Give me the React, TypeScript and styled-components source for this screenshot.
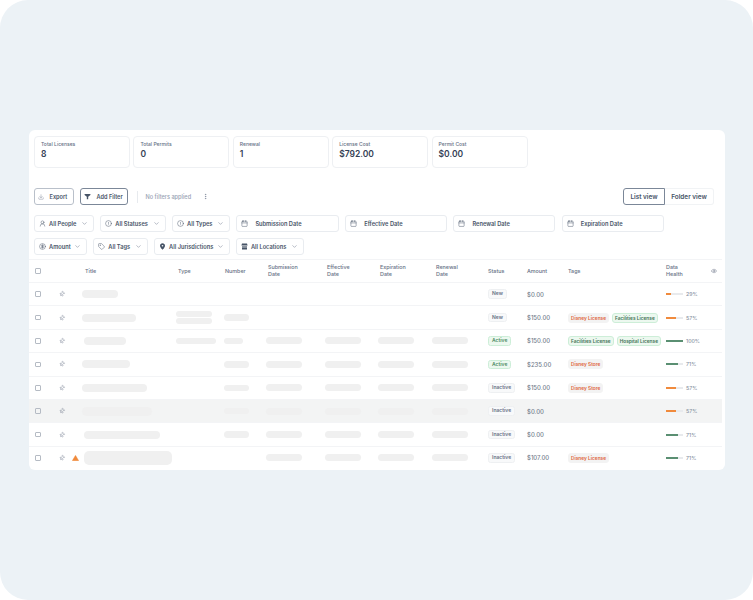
import { FC, ReactNode } from 'react';
import styled, { createGlobalStyle } from 'styled-components';
import {
  Calendar,
  ChevronDown,
  CircleAlert,
  CircleDollarSign,
  Download,
  Eye,
  EllipsisVertical,
  Pin,
  Tag,
  UserRound,
} from 'lucide-react';

const GlobalStyle = createGlobalStyle`
  html, body {
    margin: 0;
    padding: 0;
    background: #fff;
  }
  * {
    box-sizing: border-box;
  }
`;

const Page = styled.div`
  width: 753px;
  height: 600px;
  padding: 130px 28px 130px 29px;
  background: #ecf2f6;
  border-radius: 28px;
  font-family: Inter, 'Liberation Sans', sans-serif;
  color: #475467;
  overflow: hidden;
`;

const Card = styled.div`
  height: 340px;
  background: #fff;
  border-radius: 6px;
  padding-top: 6px;
`;

const Stats = styled.div`
  display: flex;
  gap: 3.4px;
  padding-left: 5px;
`;

const Stat = styled.div`
  width: 96px;
  height: 32px;
  padding: 4px 6px;
  border: 1px solid #eef0f3;
  border-radius: 4px;
`;

const StatLabel = styled.div`
  font-size: 5px;
  line-height: 6px;
  font-weight: 500;
  color: #667085;
`;

const StatValue = styled.div`
  margin-top: 1.5px;
  font-size: 8.5px;
  line-height: 10px;
  font-weight: 600;
  color: #344054;
`;

const Toolbar = styled.div`
  display: flex;
  align-items: center;
  height: 17px;
  margin-top: 20px;
  padding: 0 11px 0 5px;
`;

const ToolButton = styled.div<{ $w: number; $dark?: boolean }>`
  display: flex;
  align-items: center;
  gap: 5.5px;
  width: ${(p) => p.$w}px;
  height: 17px;
  margin-right: 6.5px;
  padding-left: 3px;
  border: 1px solid ${(p) => (p.$dark ? '#7b8798' : '#b9c0ca')};
  border-radius: 3px;
  font-size: 5.6px;
  font-weight: 600;
  white-space: nowrap;
  color: #475467;
`;

const Divider = styled.div`
  width: 1px;
  height: 12px;
  margin: 0 8px 0 2px;
  background: #e7eaee;
`;

const NoFilters = styled.span`
  width: 56px;
  font-size: 5.6px;
  font-weight: 500;
  color: #98a2b3;
`;

const ViewSwitch = styled.div`
  display: flex;
  margin-left: auto;
`;

const ViewTab = styled.div<{ $active?: boolean }>`
  display: flex;
  align-items: center;
  justify-content: center;
  width: ${(p) => (p.$active ? 42 : 49)}px;
  height: 17px;
  border: 1px solid ${(p) => (p.$active ? '#7b8798' : '#f1f3f5')};
  border-left: ${(p) => (p.$active ? '1px solid #7b8798' : 'none')};
  border-radius: ${(p) => (p.$active ? '3px 0 0 3px' : '0 3px 3px 0')};
  font-size: 6.4px;
  font-weight: 600;
  color: #475467;
`;

const FilterRow = styled.div`
  display: flex;
  gap: 6.3px;
  height: 17px;
  margin-top: 6px;
  padding-left: 5px;
  &:first-of-type {
    margin-top: 10px;
  }
`;

const FilterBox = styled.div<{ $w: number }>`
  display: flex;
  align-items: center;
  flex: none;
  width: ${(p) => p.$w}px;
  height: 17px;
  padding: 0 5px 0 4px;
  border: 1px solid #e9ecf0;
  border-radius: 3px;
  font-size: 5.7px;
  font-weight: 600;
  white-space: nowrap;
  color: #475467;
  svg {
    flex: none;
  }
`;

const FilterText = styled.span<{ $date?: boolean }>`
  margin-left: ${(p) => (p.$date ? 7 : 3)}px;
  flex: 1;
`;

const Table = styled.div`
  width: 693px;
  margin-top: 4px;
`;

const Row = styled.div<{ $head?: boolean; $hl?: boolean }>`
  display: grid;
  grid-template-columns: 26px 13px 14px 94px 48px 42px 59px 53px 54px 56px 39px 41px 98px 45px 11px;
  align-items: center;
  height: ${(p) => (p.$head ? 23 : 23.4)}px;
  border-top: 1px solid #f3f4f6;
  background: ${(p) => (p.$hl ? '#f3f4f4' : 'transparent')};
`;

const HeadCell = styled.div<{ $pad?: number }>`
  padding-left: ${(p) => p.$pad ?? 0}px;
  font-size: 5.4px;
  line-height: 7px;
  font-weight: 500;
  color: #667085;
`;

const CheckCell = styled.div`
  display: flex;
  padding-left: 6px;
`;

const Check = styled.div`
  width: 5.5px;
  height: 5.5px;
  border: 1px solid #b5bbc4;
  border-radius: 1px;
`;

const IconCell = styled.div`
  display: flex;
  align-items: center;
  justify-content: center;
  color: #667085;
`;

const EyeCell = styled.div`
  display: flex;
  color: #667085;
`;

const Skeleton = styled.div<{ $w: number; $h?: number; $ml?: number }>`
  width: ${(p) => p.$w}px;
  height: ${(p) => p.$h ?? 7}px;
  margin-left: ${(p) => p.$ml ?? 0}px;
  background: #f0f0f0;
  border-radius: 5px;
`;

const SkeletonStack = styled.div`
  display: flex;
  flex-direction: column;
  gap: 1.5px;
`;

const StatusCell = styled.div`
  display: flex;
  align-items: center;
`;

const Status = styled.span<{ $active?: boolean }>`
  padding: 0 3px;
  height: 9.5px;
  line-height: 7.5px;
  font-size: 5px;
  font-weight: 600;
  background: ${(p) => (p.$active ? '#ecf8ef' : '#f8f9fa')};
  border: 1px solid ${(p) => (p.$active ? '#cdeed8' : '#eef0f2')};
  border-radius: 2.5px;
  color: ${(p) => (p.$active ? '#4c8a64' : '#667085')};
`;

const Amount = styled.div`
  font-size: 6px;
  font-weight: 500;
  color: #737d8c;
`;

const Tags = styled.div`
  display: flex;
  gap: 3px;
  white-space: nowrap;
`;

const TagPill = styled.span<{ $green?: boolean }>`
  padding: 0 2px;
  height: 10px;
  line-height: 8.6px;
  font-size: 4.8px;
  font-weight: 600;
  background: ${(p) => (p.$green ? '#ecf8ef' : '#f3f3f3')};
  border: 0.7px solid ${(p) => (p.$green ? '#cdeed8' : '#f3f3f3')};
  border-radius: 3px;
  color: ${(p) => (p.$green ? '#3f7256' : '#e0653c')};
`;

const Health = styled.div`
  display: flex;
  align-items: center;
  gap: 3px;
`;

const Track = styled.div`
  width: 17px;
  height: 2px;
  background: #e8eaed;
`;

const Fill = styled.div<{ $color: string }>`
  height: 100%;
  background: ${(p) => p.$color};
`;

const Pct = styled.span`
  font-size: 5.2px;
  font-weight: 500;
  color: #8a94a3;
`;

const Warning: FC = () => (
  <svg width="7" height="6" viewBox="0 0 8 7">
    <path d="M4 .4 7.8 6.6H.2z" fill="#f08a3c" stroke="#f08a3c" strokeWidth=".4" strokeLinejoin="round" />
  </svg>
);

const FilterFunnel: FC = () => (
  <svg width="7" height="7" viewBox="0 0 7 7">
    <path d="M.6 1h5.8v1L4.2 3.8V6.2H2.8V3.8L.6 2z" fill="#475467" />
  </svg>
);

const MapMarker: FC = () => (
  <svg width="7" height="7" viewBox="0 0 7 7">
    <path d="M3.5.3C2 .3 1 1.4 1 2.7c0 1.7 2.5 4 2.5 4S6 4.4 6 2.7C6 1.4 5 .3 3.5.3z" fill="#475467" />
    <circle cx="3.5" cy="2.7" r=".8" fill="#fff" />
  </svg>
);

const StoreFilled: FC = () => (
  <svg width="7" height="7" viewBox="0 0 7 7">
    <path d="M1 .6h5l.6 2H.4zM1 3.2h5v3.2H1z" fill="#475467" />
    <path d="M1 4.2h5" stroke="#fff" strokeWidth=".5" />
  </svg>
);

const stats = [
  ['Total Licenses', '8'],
  ['Total Permits', '0'],
  ['Renewal', '1'],
  ['License Cost', '$792.00'],
  ['Permit Cost', '$0.00'],
];

const small = { size: 7, strokeWidth: 1.6 };
const chevron = <ChevronDown size={7} strokeWidth={1.6} color="#667085" />;

const filtersTop: { w: number; icon: ReactNode; label: string; date?: boolean }[] = [
  { w: 60, icon: <UserRound {...small} />, label: 'All People' },
  { w: 65.5, icon: <CircleAlert {...small} />, label: 'All Statuses' },
  { w: 58, icon: <CircleAlert {...small} />, label: 'All Types' },
  { w: 102.5, icon: <Calendar {...small} />, label: 'Submission Date', date: true },
  { w: 102, icon: <Calendar {...small} />, label: 'Effective Date', date: true },
  { w: 102, icon: <Calendar {...small} />, label: 'Renewal Date', date: true },
  { w: 102, icon: <Calendar {...small} />, label: 'Expiration Date', date: true },
];

const filtersBottom: { w: number; icon: ReactNode; label: string }[] = [
  { w: 53, icon: <CircleDollarSign {...small} />, label: 'Amount' },
  { w: 54.5, icon: <Tag {...small} />, label: 'All Tags' },
  { w: 75.5, icon: <MapMarker />, label: 'All Jurisdictions' },
  { w: 68, icon: <StoreFilled />, label: 'All Locations' },
];

type TagData = { label: string; green?: boolean };

type RowData = {
  title: number;
  titleMl?: number;
  titleH?: number;
  warn?: boolean;
  type?: number[];
  number?: number;
  dates?: boolean;
  status: string;
  amount: string;
  tags?: TagData[];
  health: number;
  hl?: boolean;
};

const disneyLicense = { label: 'Disney License' };
const disneyStore = { label: 'Disney Store' };

const rows: RowData[] = [
  { title: 36, status: 'New', amount: '$0.00', health: 29 },
  {
    title: 54,
    type: [36, 36],
    number: 25,
    status: 'New',
    amount: '$150.00',
    tags: [disneyLicense, { label: 'Facilities License', green: true }],
    health: 57,
  },
  {
    title: 42,
    titleMl: 2,
    type: [40],
    number: 19,
    dates: true,
    status: 'Active',
    amount: '$150.00',
    tags: [
      { label: 'Facilities License', green: true },
      { label: 'Hospital License', green: true },
    ],
    health: 100,
  },
  { title: 48, number: 25, dates: true, status: 'Active', amount: '$235.00', tags: [disneyStore], health: 71 },
  { title: 65, number: 25, dates: true, status: 'Inactive', amount: '$150.00', tags: [disneyStore], health: 57 },
  { title: 70, titleH: 9, number: 25, dates: true, status: 'Inactive', amount: '$0.00', health: 57, hl: true },
  { title: 76, titleMl: 2, number: 25, dates: true, status: 'Inactive', amount: '$0.00', health: 71 },
  {
    title: 88,
    titleMl: 2,
    titleH: 14,
    warn: true,
    dates: true,
    status: 'Inactive',
    amount: '$107.00',
    tags: [disneyLicense],
    health: 71,
  },
];

const healthColor = (v: number) => (v >= 70 ? '#5a8f72' : '#f08a3c');

const App: FC = () => {
  return (
    <Page>
      <GlobalStyle />
      <Card>
        <Stats>
          {stats.map(([label, value]) => (
            <Stat key={label}>
              <StatLabel>{label}</StatLabel>
              <StatValue>{value}</StatValue>
            </Stat>
          ))}
        </Stats>

        <Toolbar>
          <ToolButton $w={39.5}>
            <Download size={6} strokeWidth={1.5} color="#667085" />
            Export
          </ToolButton>
          <ToolButton $w={48} $dark>
            <FilterFunnel />
            Add Filter
          </ToolButton>
          <Divider />
          <NoFilters>No filters applied</NoFilters>
          <EllipsisVertical size={7} strokeWidth={1.6} color="#667085" />
          <ViewSwitch>
            <ViewTab $active>List view</ViewTab>
            <ViewTab>Folder view</ViewTab>
          </ViewSwitch>
        </Toolbar>

        <div>
          <FilterRow>
            {filtersTop.map((f) => (
              <FilterBox key={f.label} $w={f.w}>
                {f.icon}
                <FilterText $date={f.date}>{f.label}</FilterText>
                {!f.date && chevron}
              </FilterBox>
            ))}
          </FilterRow>
          <FilterRow>
            {filtersBottom.map((f) => (
              <FilterBox key={f.label} $w={f.w}>
                {f.icon}
                <FilterText>{f.label}</FilterText>
                {chevron}
              </FilterBox>
            ))}
          </FilterRow>
        </div>

        <Table>
          <Row $head>
            <CheckCell>
              <Check />
            </CheckCell>
            <div />
            <div />
            <HeadCell $pad={3}>Title</HeadCell>
            <HeadCell $pad={2}>Type</HeadCell>
            <HeadCell $pad={1}>Number</HeadCell>
            <HeadCell $pad={2}>
              Submission
              <br />
              Date
            </HeadCell>
            <HeadCell $pad={2}>
              Effective
              <br />
              Date
            </HeadCell>
            <HeadCell $pad={2}>
              Expiration
              <br />
              Date
            </HeadCell>
            <HeadCell $pad={4}>
              Renewal
              <br />
              Date
            </HeadCell>
            <HeadCell>Status</HeadCell>
            <HeadCell>Amount</HeadCell>
            <HeadCell>Tags</HeadCell>
            <HeadCell>
              Data
              <br />
              Health
            </HeadCell>
            <EyeCell>
              <Eye size={6} strokeWidth={1.8} />
            </EyeCell>
          </Row>

          {rows.map((r, i) => (
            <Row key={i} $hl={r.hl}>
              <CheckCell>
                <Check />
              </CheckCell>
              <IconCell>
                <Pin size={6} strokeWidth={1.6} style={{ transform: 'rotate(40deg)' }} />
              </IconCell>
              <IconCell>{r.warn && <Warning />}</IconCell>
              <Skeleton $w={r.title} $h={r.titleH ?? 8} $ml={r.titleMl} />
              <SkeletonStack>
                {r.type?.map((w, j) => (
                  <Skeleton key={j} $w={w} $h={6} />
                ))}
              </SkeletonStack>
              <div>{r.number && <Skeleton $w={r.number} $h={6.5} />}</div>
              {[0, 1, 2, 3].map((d) => (
                <div key={d}>{r.dates && <Skeleton $w={36} />}</div>
              ))}
              <StatusCell>
                <Status $active={r.status === 'Active'}>{r.status}</Status>
              </StatusCell>
              <Amount>{r.amount}</Amount>
              <Tags>
                {r.tags?.map((t) => (
                  <TagPill key={t.label} $green={t.green}>
                    {t.label}
                  </TagPill>
                ))}
              </Tags>
              <Health>
                <Track>
                  <Fill $color={healthColor(r.health)} style={{ width: `${r.health}%` }} />
                </Track>
                <Pct>{r.health}%</Pct>
              </Health>
              <div />
            </Row>
          ))}
        </Table>
      </Card>
    </Page>
  );
};

export default App;
